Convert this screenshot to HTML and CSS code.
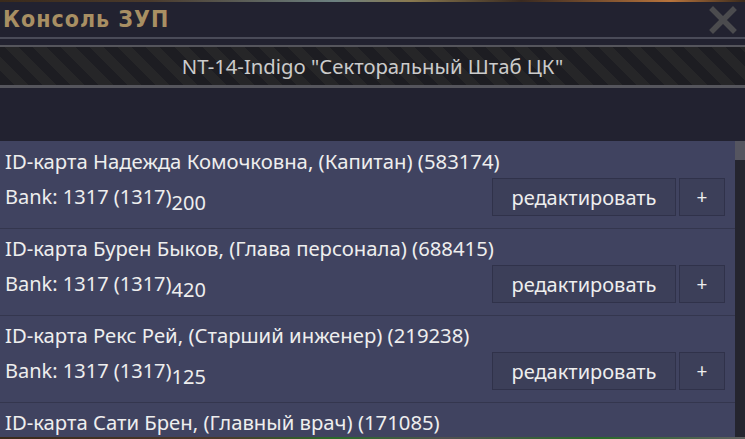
FILE: index.html
```html
<!DOCTYPE html>
<html lang="ru">
<head>
<meta charset="utf-8">
<link rel="stylesheet" href="styles.css">
</head>
<body>
<div class="game-strip"></div>
<div class="window">
  <div class="titlebar">
    <span class="title">Консоль ЗУП</span>
    <svg class="close" width="28" height="28" viewBox="0 0 28 28"><path d="M4 4 L24 24 M24 4 L4 24" stroke="#4b4b4e" stroke-width="5.5" stroke-linecap="square"/></svg>
  </div>
  <div class="rule"></div>
  <div class="station-bar">NT-14-Indigo "Секторальный Штаб ЦК"</div>
  <div class="spacer"></div>
  <div class="list-wrap">
    <div class="list">
      <div class="item">
        <div class="name">ID-карта Надежда Комочковна, (Капитан) (583174)</div>
        <div class="row">
          <div class="bank">Bank: 1317 (1317)<sub>200</sub></div>
          <div class="buttons"><button class="btn edit">редактировать</button><button class="btn plus">+</button></div>
        </div>
      </div>
      <div class="item">
        <div class="name">ID-карта Бурен Быков, (Глава персонала) (688415)</div>
        <div class="row">
          <div class="bank">Bank: 1317 (1317)<sub>420</sub></div>
          <div class="buttons"><button class="btn edit">редактировать</button><button class="btn plus">+</button></div>
        </div>
      </div>
      <div class="item">
        <div class="name">ID-карта Рекс Рей, (Старший инженер) (219238)</div>
        <div class="row">
          <div class="bank">Bank: 1317 (1317)<sub>125</sub></div>
          <div class="buttons"><button class="btn edit">редактировать</button><button class="btn plus">+</button></div>
        </div>
      </div>
      <div class="item">
        <div class="name">ID-карта Сати Брен, (Главный врач) (171085)</div>
      </div>
    </div>
    <div class="scrollbar"><div class="thumb"></div></div>
  </div>
</div>
<div class="game-strip bottom"></div>
</body>
</html>
```
FILE: styles.css
```css
html, body {
  margin: 0;
  padding: 0;
}
body {
  width: 745px;
  height: 439px;
  overflow: hidden;
  background: #222230;
  font-family: "Noto Sans", "Open Sans", sans-serif;
}
.game-strip {
  height: 2px;
  background: linear-gradient(90deg, #3a2a1c 0%, #4a3a2c 20%, #6c8080 45%, #8a7a50 55%, #3a2a20 70%, #b8743c 90%, #3a2a1c 100%);
}
.game-strip.bottom {
  background: linear-gradient(90deg, #3a2a1c 0%, #4a3a2c 30%, #2a6a2a 45%, #505050 60%, #2a6a2a 80%, #606060 100%);
}
.window {
  height: 435px;
  display: flex;
  flex-direction: column;
  background: #222230;
}
.titlebar {
  height: 35px;
  display: flex;
  align-items: center;
  justify-content: space-between;
  padding: 0 8px 0 3px;
  border-bottom: 2px solid #4a4b58;
}
.title {
  font-family: "DejaVu Sans Condensed", "DejaVu Sans", sans-serif;
  font-stretch: condensed;
  font-weight: bold;
  font-size: 23px;
  letter-spacing: 1px;
  color: #a88f63;
  position: relative;
  top: -1px;
}
.close {
  display: block;
}
.rule {
  height: 6px;
  border-bottom: 2px solid #55555c;
}
.station-bar {
  height: 38px;
  line-height: 38px;
  text-align: center;
  color: #cbcbcb;
  font-size: 20.3px;
  background: repeating-linear-gradient(45deg, #1d1d22 0px, #1d1d22 10px, #262628 10px, #262628 20px);
  border-bottom: 3px solid #55555c;
}
.spacer {
  height: 53px;
}
.list-wrap {
  flex: 1;
  display: flex;
  min-height: 0;
}
.list {
  flex: 1;
  background: #404360;
  overflow: hidden;
}
.item {
  box-sizing: border-box;
  height: 87px;
  border-top: 1px solid #34364e;
  padding: 5px 10px 0 5px;
  color: #eeeeee;
  font-size: 20px;
}
.item:first-child {
  border-top: 1px solid #404360;
}
.name {
  line-height: 28px;
  font-size: 20.3px;
  white-space: nowrap;
}
.row {
  display: flex;
  justify-content: space-between;
  align-items: center;
  margin-top: 3px;
}
.bank {
  line-height: 28px;
  white-space: nowrap;
}
.bank sub {
  font-size: 20px;
  vertical-align: -6px;
  line-height: 0;
}
.buttons {
  display: flex;
  gap: 3px;
}
.btn {
  height: 38px;
  background: #3c3f59;
  border: 1px solid #30324a;
  color: #eeeeee;
  font-family: "Noto Sans", "Open Sans", sans-serif;
  font-size: 20px;
  padding: 0;
  margin: 0;
}
.btn.edit {
  width: 184px;
}
.btn.plus {
  width: 46px;
  font-size: 19px;
}
.scrollbar {
  width: 10px;
  background: #25252f;
}
.thumb {
  height: 19px;
  background: #555560;
}
```
